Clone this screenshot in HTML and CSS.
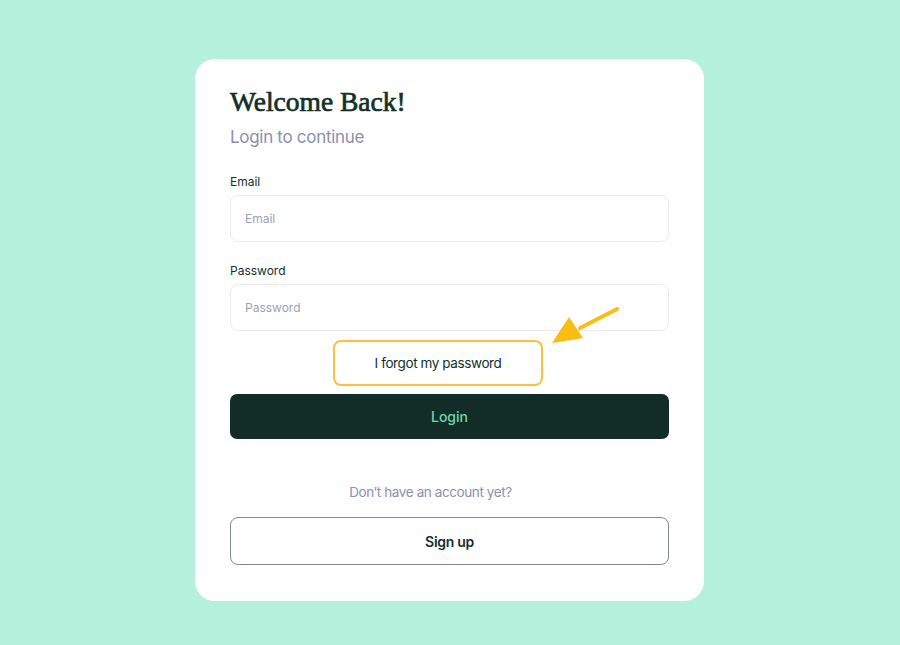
FILE: index.html
```html
<!DOCTYPE html>
<html>
<head>
<meta charset="utf-8">
<link rel="stylesheet" href="styles.css">
</head>
<body>
<main class="page">
  <section class="card">
    <h1 class="title">Welcome Back!</h1>
    <p class="subtitle">Login to continue</p>
    <form class="form">
      <label class="field">
        <span class="label">Email</span>
        <input class="input" type="text" placeholder="Email">
      </label>
      <label class="field">
        <span class="label">Password</span>
        <input class="input" type="password" placeholder="Password">
      </label>
      <div class="forgot-row">
        <a class="forgot">I forgot my password</a>
      </div>
      <button class="btn-login" type="button">Login</button>
    </form>
    <p class="no-account">Don’t have an account yet?</p>
    <button class="btn-signup" type="button">Sign up</button>
    <svg class="arrow" width="80" height="50" viewBox="0 0 80 50">
      <line x1="72" y1="7" x2="35" y2="26" stroke="#fbbd12" stroke-width="4" stroke-linecap="round"/>
      <polygon points="7,41 24,15 38,36" fill="#fbbd12"/>
    </svg>
  </section>
</main>
</body>
</html>
```
FILE: styles.css
```css
* { box-sizing: border-box; }
html, body { margin: 0; padding: 0; }
body {
  background: #b4f0dc;
  font-family: Inter, "Liberation Sans", sans-serif;
  width: 900px;
  height: 645px;
  overflow: hidden;
}
.page {
  display: flex;
  padding-top: 59px;
  padding-left: 195px;
}
.card {
  position: relative;
  width: 509px;
  height: 542px;
  background: #fff;
  border-radius: 20px;
  padding: 27px 35px 0 35px;
}
.title {
  margin: 0;
  font-family: "Liberation Serif", serif;
  font-weight: 400;
  font-size: 27.5px;
  line-height: 32px;
  color: #12302a;
  -webkit-text-stroke: 0.7px #12302a;
  letter-spacing: 0;
}
.subtitle {
  margin: 8px 0 0 0;
  font-size: 17px;
  line-height: 22px;
  color: #8b8fac;
  letter-spacing: -0.3px;
}
.form {
  display: flex;
  flex-direction: column;
  margin-top: 26px;
}
.field {
  display: flex;
  flex-direction: column;
  margin-bottom: 21px;
}
.label {
  font-size: 12px;
  line-height: 16px;
  color: #12302a;
  margin-bottom: 5px;
}
.input {
  height: 47px;
  border: 1px solid #e9eaf0;
  border-radius: 8px;
  padding: 0 14px;
  font-family: inherit;
  font-size: 12px;
  color: #12302a;
  outline: none;
}
.input::placeholder { color: #9b9fb6; }
.field:nth-child(2) { margin-bottom: 9px; }
.forgot-row {
  display: flex;
  padding-left: 103px;
}
.forgot {
  width: 210px;
  height: 46px;
  border: 2.5px solid #fcbf3f;
  border-radius: 8px;
  display: flex;
  align-items: center;
  justify-content: center;
  font-size: 13.5px;
  color: #12302a;
  letter-spacing: -0.4px;
}
.btn-login {
  margin-top: 8px;
  height: 45px;
  border: none;
  border-radius: 7px;
  background: #122c27;
  color: #6fd9ab;
  font-family: inherit;
  font-size: 14px;
  font-weight: 500;
}
.no-account {
  margin: 44px 0 0 0;
  padding-right: 38px;
  text-align: center;
  font-size: 13.5px;
  line-height: 18px;
  color: #8b8fac;
  letter-spacing: -0.4px;
}
.btn-signup {
  display: block;
  width: 100%;
  margin-top: 16px;
  height: 48px;
  background: #fff;
  border: 1px solid #7f8c8a;
  border-radius: 8px;
  font-family: inherit;
  font-size: 14px;
  font-weight: 600;
  color: #12302a;
  letter-spacing: -0.3px;
}
.arrow {
  position: absolute;
  left: 350px;
  top: 243px;
}
```
